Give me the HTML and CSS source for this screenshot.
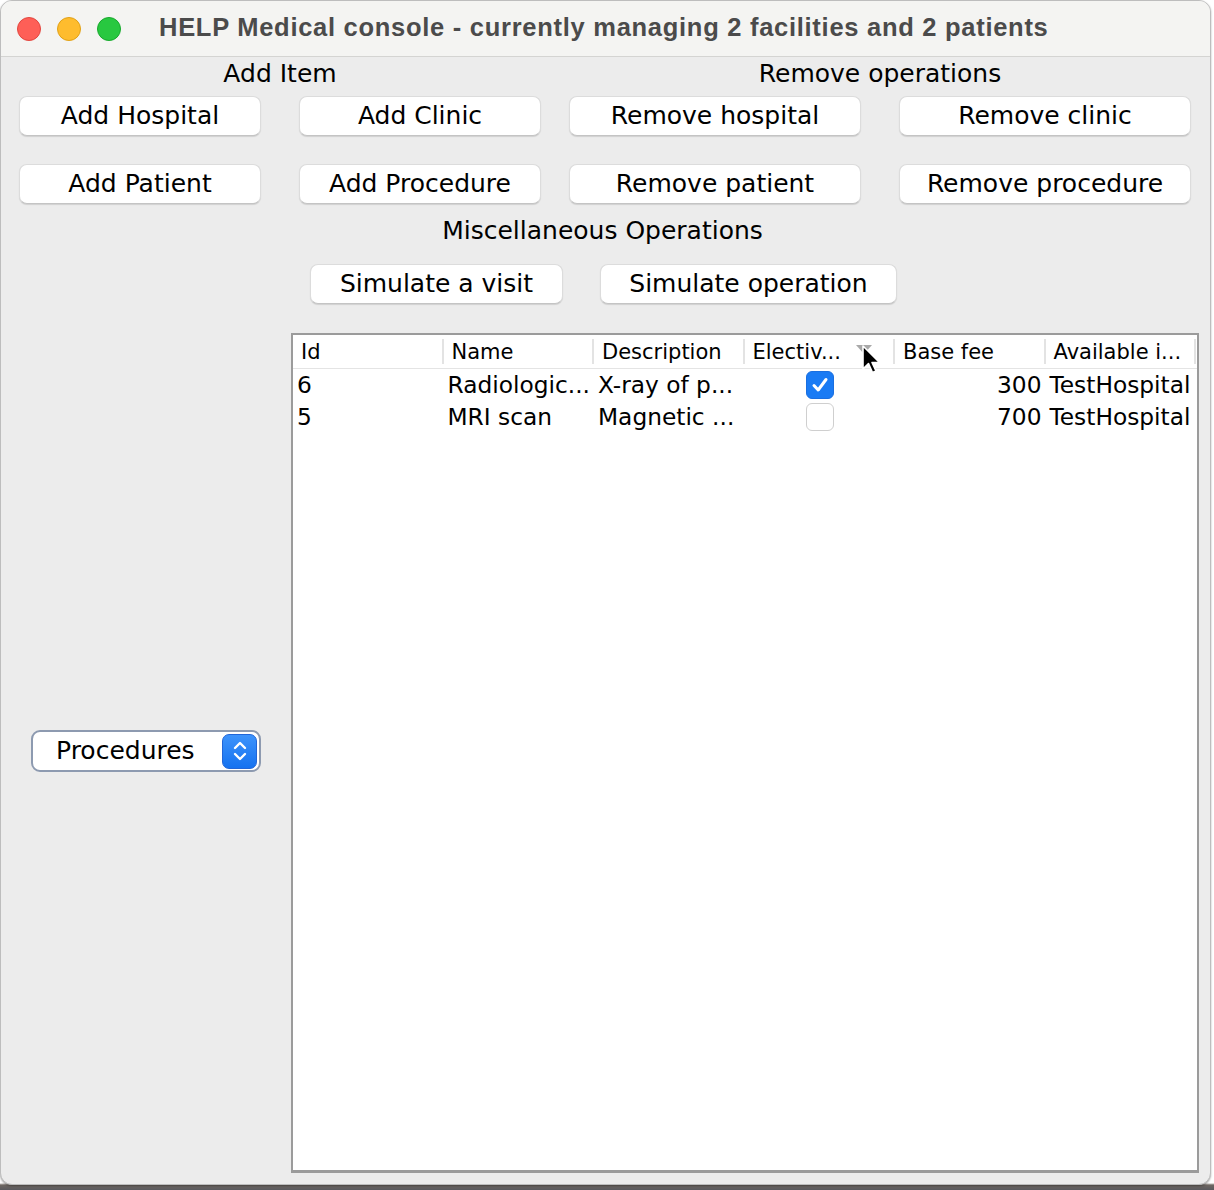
FILE: index.html
```html
<!DOCTYPE html>
<html>
<head>
<meta charset="utf-8">
<link rel="stylesheet" href="styles.css">
</head>
<body>
<div class="window">
  <div class="titlebar">
    <div class="lights">
      <span class="light red"></span>
      <span class="light yellow"></span>
      <span class="light green"></span>
    </div>
    <div class="title">HELP Medical console - currently managing 2 facilities and 2 patients</div>
  </div>
  <div class="content">
    <div class="ops">
      <div class="group group-add">
        <div class="group-label">Add Item</div>
        <div class="btn-grid">
          <button class="btn">Add Hospital</button>
          <button class="btn">Add Clinic</button>
          <button class="btn">Add Patient</button>
          <button class="btn">Add Procedure</button>
        </div>
      </div>
      <div class="group group-remove">
        <div class="group-label">Remove operations</div>
        <div class="btn-grid">
          <button class="btn">Remove hospital</button>
          <button class="btn">Remove clinic</button>
          <button class="btn">Remove patient</button>
          <button class="btn">Remove procedure</button>
        </div>
      </div>
    </div>
    <div class="misc">
      <div class="misc-label">Miscellaneous Operations</div>
      <div class="misc-row">
        <button class="btn btn-visit">Simulate a visit</button>
        <button class="btn btn-operation">Simulate operation</button>
      </div>
    </div>
    <div class="main">
      <div class="side">
        <div class="combo">
          <span class="combo-text">Procedures</span>
          <span class="stepper">
            <svg width="22" height="28" viewBox="0 0 22 28">
              <path d="M6 11 L11 6 L16 11" fill="none" stroke="#fff" stroke-width="2.4" stroke-linecap="round" stroke-linejoin="round"/>
              <path d="M6 17 L11 22 L16 17" fill="none" stroke="#fff" stroke-width="2.4" stroke-linecap="round" stroke-linejoin="round"/>
            </svg>
          </span>
        </div>
      </div>
      <div class="table-wrap">
        <div class="thead">
          <div class="th">Id</div>
          <div class="th">Name</div>
          <div class="th">Description</div>
          <div class="th">Electiv...</div>
          <div class="th">Base fee</div>
          <div class="th">Available i...</div>
        </div>
        <div class="tr">
          <div class="td">6</div>
          <div class="td">Radiologic...</div>
          <div class="td">X-ray of p...</div>
          <div class="td td-check"><span class="check checked">
            <svg width="20" height="18" viewBox="0 0 20 18"><path d="M4 9.5 L8.2 14 L16 3.5" fill="none" stroke="#fff" stroke-width="3" stroke-linecap="round" stroke-linejoin="round"/></svg>
          </span></div>
          <div class="td td-num">300</div>
          <div class="td">TestHospital</div>
        </div>
        <div class="tr">
          <div class="td">5</div>
          <div class="td">MRI scan</div>
          <div class="td">Magnetic ...</div>
          <div class="td td-check"><span class="check"></span></div>
          <div class="td td-num">700</div>
          <div class="td">TestHospital</div>
        </div>
        <svg class="sort-arrow" width="16" height="9" viewBox="0 0 16 9"><path d="M0 0 L16 0 L8 9 Z" fill="#a9a9a9"/></svg>
        <svg class="cursor" width="22" height="32" viewBox="0 0 22 32">
          <path d="M2 2 L2 25 L7.5 19.5 L11.5 28.5 L15 27 L11 18.5 L18.5 18.5 Z" fill="#000" stroke="#fff" stroke-width="1.6" stroke-linejoin="round"/>
        </svg>
      </div>
    </div>
  </div>
</div>
</body>
</html>
```

FILE: styles.css
```css
* { box-sizing: border-box; }
html, body {
  margin: 0;
  padding: 0;
  width: 1214px;
  height: 1190px;
  overflow: hidden;
}
body {
  background: linear-gradient(to bottom, #ffffff 0, #ffffff 1183px, #6e6661 1185px, #5a5a5e 1190px);
  font-family: "DejaVu Sans", "Liberation Sans", sans-serif;
  color: #000;
}
.window {
  width: 1211px;
  height: 1185px;
  border: 1px solid #bdbdbd;
  border-radius: 12px;
  background: #ececec;
  overflow: hidden;
  display: flex;
  flex-direction: column;
  box-shadow: 0 1px 2px rgba(0,0,0,0.35);
}
.titlebar {
  height: 56px;
  flex: none;
  background: #f4f4f2;
  border-bottom: 1px solid #d4d4d2;
  display: flex;
  align-items: center;
}
.lights {
  display: flex;
  gap: 16px;
  padding-left: 16px;
}
.light {
  width: 24px;
  height: 24px;
  border-radius: 50%;
  display: block;
}
.red { background: #fe5f57; border: 1px solid #e2463f; }
.yellow { background: #febc2e; border: 1px solid #e1a116; }
.green { background: #28c840; border: 1px solid #17a92c; }
.title {
  margin-left: 38px;
  margin-top: -3px;
  font-family: "Liberation Sans", Arial, sans-serif;
  font-weight: bold;
  font-size: 25.5px;
  letter-spacing: 0.72px;
  color: #4b4b4b;
  white-space: nowrap;
}
.content {
  flex: 1;
  display: flex;
  flex-direction: column;
  padding-top: 3px;
}
.ops {
  display: flex;
  padding-left: 18px;
  gap: 28px;
}
.group-label {
  text-align: center;
  font-size: 25px;
  height: 36px;
  line-height: 28px;
}
.btn-grid {
  display: grid;
  gap: 28px 38px;
}
.group-add .btn-grid { grid-template-columns: 242px 242px; }
.group-remove .btn-grid { grid-template-columns: 292px 292px; }
.btn {
  height: 40px;
  background: #fff;
  border: 1px solid #dcdcdc;
  border-bottom-color: #c4c4c4;
  border-radius: 8px;
  box-shadow: 0 1px 1px rgba(0,0,0,0.12);
  font-family: "DejaVu Sans", sans-serif;
  font-size: 25px;
  color: #000;
  padding: 0;
  line-height: 36px;
  text-align: center;
}
.misc {
  display: flex;
  flex-direction: column;
  align-items: center;
  padding-top: 12px;
}
.misc-label {
  font-size: 25px;
  line-height: 30px;
  height: 30px;
  margin-left: -6px;
}
.misc-row {
  display: flex;
  gap: 37px;
  margin-top: 18px;
  margin-left: -4px;
}
.btn-visit { width: 253px; }
.btn-operation { width: 297px; }
.main {
  flex: 1;
  display: flex;
  margin-top: 29px;
  padding-bottom: 11px;
}
.side {
  width: 290px;
  flex: none;
  display: flex;
  align-items: center;
  justify-content: center;
  padding-bottom: 4px;
}
.combo {
  width: 230px;
  height: 42px;
  border: 2px solid #8d9ab0;
  border-radius: 9px;
  background: #fff;
  display: flex;
  align-items: center;
  justify-content: space-between;
  padding: 0 2px 0 23px;
}
.combo-text {
  font-size: 25px;
  line-height: 30px;
}
.stepper {
  width: 35px;
  height: 35px;
  border-radius: 7px;
  background: linear-gradient(#3d93fb, #1572f0);
  border: 1px solid #2166d8;
  display: flex;
  align-items: center;
  justify-content: center;
}
.table-wrap {
  position: relative;
  width: 908px;
  flex: none;
  background: #fff;
  border: 2px solid #9b9b9b;
  border-bottom-width: 3px;
}
.thead {
  display: grid;
  grid-template-columns: repeat(6, 150.5px);
  height: 34px;
  border-bottom: 1px solid #e4e4e4;
}
.th {
  font-size: 21px;
  padding-left: 8px;
  border-right: 2px solid #e3e3e3;
  margin: 4px 0;
  line-height: 26px;
  white-space: nowrap;
  overflow: hidden;
}
.tr {
  display: grid;
  grid-template-columns: repeat(6, 150.5px);
  height: 32px;
}
.td {
  font-size: 23.3px;
  line-height: 32px;
  padding-left: 4px;
  white-space: nowrap;
  overflow: hidden;
}
.td-num {
  text-align: right;
  padding-right: 4px;
}
.td-check {
  display: flex;
  align-items: center;
  justify-content: center;
  padding-left: 0;
}
.check {
  width: 28px;
  height: 28px;
  border-radius: 6px;
  border: 1px solid #cfcfcf;
  background: #fff;
  display: flex;
  align-items: center;
  justify-content: center;
}
.check.checked {
  background: #1a7bf4;
  border-color: #1a6fe0;
}
.sort-arrow {
  position: absolute;
  left: 563px;
  top: 10px;
}
.cursor {
  position: absolute;
  left: 568px;
  top: 9px;
}
```
